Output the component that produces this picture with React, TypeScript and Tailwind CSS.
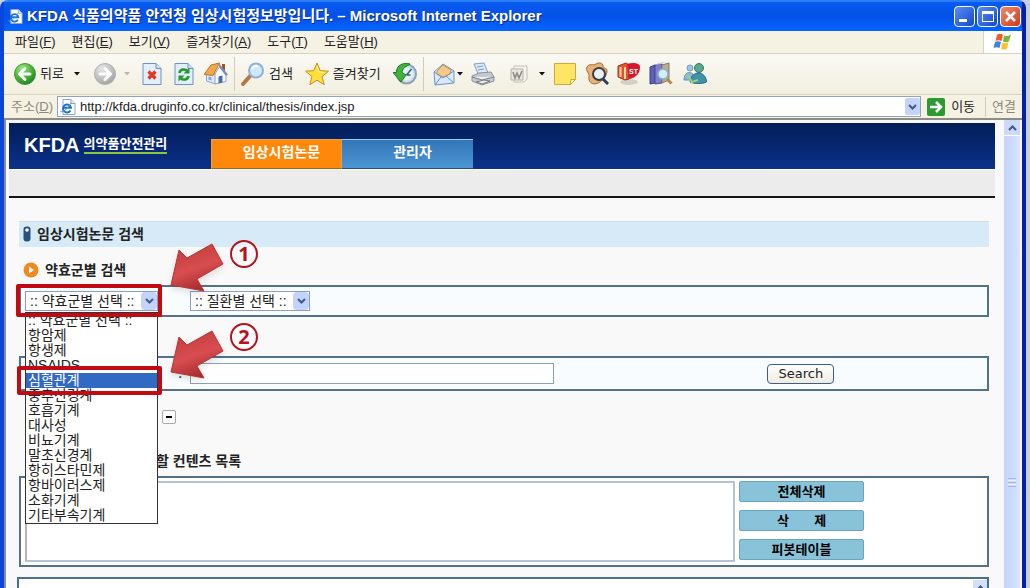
import React, { useState } from "react";

const groups = [
  ":: 약효군별 선택 ::",
  "항암제",
  "항생제",
  "NSAIDS",
  "심혈관계",
  "중추신경계",
  "호흡기계",
  "대사성",
  "비뇨기계",
  "말초신경계",
  "항히스타민제",
  "항바이러스제",
  "소화기계",
  "기타부속기계",
];

const menus = [
  ["파일", "F"],
  ["편집", "E"],
  ["보기", "V"],
  ["즐겨찾기", "A"],
  ["도구", "T"],
  ["도움말", "H"],
];

function Caret({ muted = false }: { muted?: boolean }) {
  return (
    <svg width="6" height="4" viewBox="0 0 6 4" className="shrink-0">
      <path d="M0 0H6L3 3.5Z" fill={muted ? "#b9b7a8" : "#111"} />
    </svg>
  );
}

function IePage({ size }: { size: number }) {
  return (
    <svg width={size} height={size} viewBox="0 0 16 16" className="shrink-0">
      <path d="M3 .5h8l4 4v11H3z" fill="#fff" stroke="#8aa6c8" />
      <path d="M11 .5v4h4" fill="#dfeaf7" stroke="#8aa6c8" />
      <path d="M10.5 11.5A4 4 0 1 1 11 8.800H4" fill="none" stroke="#1d6fd0" strokeWidth="2" />
      <path d="M1 12C-1 14 6 13 11 4" fill="none" stroke="#4aa3e8" />
    </svg>
  );
}

function Arrow22({ green }: { green: boolean }) {
  return (
    <svg width="22" height="24" viewBox="0 0 22 24" className="shrink-0">
      <defs>
        <radialGradient id={green ? "orbG" : "orbN"} cx="35%" cy="25%" r="80%">
          <stop offset="0" stopColor={green ? "#9be685" : "#e6e6e6"} />
          <stop offset=".55" stopColor={green ? "#4cb53c" : "#c3c3c3"} />
          <stop offset="1" stopColor={green ? "#1d821c" : "#a2a2a2"} />
        </radialGradient>
      </defs>
      <circle cx="11" cy="12" r="10.500" fill={green ? "url(#orbG)" : "url(#orbN)"} stroke={green ? "#3f9a36" : "#b0b0b0"} />
      <g fill="none" stroke="#fff" strokeWidth="3" strokeLinecap="round" strokeLinejoin="round">
        {green ? <path d="M16 12H6M11 6.500L5.500 12L11 17.500" /> : <path d="M6 12H16M11 6.500L16.500 12L11 17.500" />}
      </g>
    </svg>
  );
}

function Ico({ children }: { children: React.ReactNode }) {
  return (
    <svg width="24" height="24" viewBox="0 0 24 24" className="shrink-0">
      {children}
    </svg>
  );
}

const StopIcon = () => (
  <Ico>
    <path d="M3 1.500h13l5 5v16H3z" fill="#e2eefb" stroke="#6f93c0" />
    <path d="M16 1.500v5h5" fill="#cfe0f5" stroke="#6f93c0" />
    <path d="M8.500 9.500l7 7M15.500 9.500l-7 7" stroke="#e2381c" strokeWidth="3.200" />
  </Ico>
);
const RefreshIcon = () => (
  <Ico>
    <path d="M3 1.500h13l5 5v16H3z" fill="#e2eefb" stroke="#6f93c0" />
    <path d="M16 1.500v5h5" fill="#cfe0f5" stroke="#6f93c0" />
    <path d="M7.500 11c.5-4 6-4.500 7.500-2" fill="none" stroke="#239a2c" strokeWidth="2.600" />
    <path d="M17.500 5.500v6h-6z" fill="#239a2c" />
    <path d="M16.500 14c-.5 4-6 4.500-7.500 2" fill="none" stroke="#239a2c" strokeWidth="2.600" />
    <path d="M6.500 19.500v-6h6z" fill="#239a2c" />
  </Ico>
);
const HomeIcon = () => (
  <Ico>
    <path d="M18 2h3v7h-3z" fill="#a8502a" />
    <path d="M2.500 12l5-5 4 6v9l-9-3z" fill="#dfe9f8" stroke="#8ea6c9" />
    <path d="M11 22V12l5-8 6 8v7.500z" fill="#f7f9fd" stroke="#8ea6c9" />
    <path d="M0 12.500L7 3l8.500-2L9 13.500z" fill="#f2a84a" stroke="#bf7420" />
    <path d="M15 1.500l9 11-2 1.500-7-9z" fill="#7a8fb8" />
    <path d="M14.500 14.500l4-1v7l-4 1z" fill="#4b6da8" />
    <path d="M4.500 14.500l3 1v3l-3-1z" fill="#7ea5dc" />
  </Ico>
);
const SearchIcon = () => (
  <Ico>
    <path d="M2 22l8-9" stroke="#b77845" strokeWidth="4" strokeLinecap="round" />
    <circle cx="15" cy="8.500" r="7" fill="#cfe9fb" stroke="#8db2d6" strokeWidth="2" />
    <path d="M11 7c1-3 4-3.500 6-2.500" fill="none" stroke="#fff" strokeWidth="2" />
  </Ico>
);
const StarIcon = () => (
  <Ico>
    <path d="M12 1l3.200 7.600 8.300.6-6.400 5.300 2.100 8.200L12 18.200 4.800 22.700l2.100-8.200L.5 9.200l8.300-.6z" fill="#ffdf3d" stroke="#c98f12" strokeLinejoin="round" />
    <path d="M12 4l2 6 5 .500" fill="none" stroke="#fff6b5" />
  </Ico>
);
const HistoryIcon = () => (
  <Ico>
    <circle cx="13.500" cy="12" r="9.500" fill="#cfe0ea" stroke="#8ba3b2" strokeWidth="2" />
    <circle cx="13.500" cy="12" r="6.500" fill="#e3f0f7" />
    <path d="M13.500 13l5-6M13.500 13h4" stroke="#345a78" strokeWidth="1.500" />
    <path d="M17 2C11 0 3 3 3.500 10.500H0l8 9.500 5-7-4-2.500c0-4 4-6 8-8.500z" fill="#43b23c" stroke="#197d20" />
  </Ico>
);
const MailIcon = () => (
  <Ico>
    <path d="M2 10l9-8 11 7v12L3 23z" fill="#d7e9fa" stroke="#6f94c2" />
    <path d="M5 9l6-6 8 5-1 4-7 3-6-3z" fill="#f6c98a" stroke="#cb9452" />
    <path d="M2 10l9 6 11-7M3 23l6-8M22 21l-8-7" fill="none" stroke="#6f94c2" />
  </Ico>
);
const PrinterIcon = () => (
  <Ico>
    <path d="M3 2l10-1 4 10-9 3z" fill="#dceafb" stroke="#7d9cc9" />
    <path d="M6 5l6-1M7 8l6-1" stroke="#7d9cc9" />
    <path d="M1 14l7-3 12-1 3 5v4l-12 4-10-4z" fill="#c6c9cf" stroke="#8d929b" />
    <path d="M1 15l10 3 12-3M5 20l8-2 6 1-8 3z" fill="#eceef1" stroke="#777c85" />
  </Ico>
);
const WordIcon = () => (
  <Ico>
    <path d="M7 4h13v13l-3 3H7z" fill="#f4f2ea" stroke="#c4c2b8" />
    <path d="M4 7h12v11H4z" fill="#e9e7df" stroke="#b5b3a9" />
    <path d="M6 10l2 6 2-5 2 5 3-7" fill="none" stroke="#8a8880" strokeWidth="1.500" />
  </Ico>
);
const NoteIcon = () => (
  <Ico>
    <path d="M1.500 1.500h21v16l-5 5h-16z" fill="#ffe566" stroke="#d1a83a" />
    <path d="M22.500 17.500h-5v5z" fill="#fff4b0" stroke="#d1a83a" />
  </Ico>
);
const ResearchIcon = () => (
  <Ico>
    <path d="M2 5c2-4 6-1 9-3s7-1 7 2 4 1 4 5-3 9-9 12S3 19 4 15 0 9 2 5z" fill="#e9b27a" stroke="#a5682f" />
    <circle cx="14" cy="12" r="6" fill="#e8f2f5" stroke="#3d3d45" strokeWidth="2" />
    <path d="M18 17l5 5" stroke="#2b3b5b" strokeWidth="3" />
  </Ico>
);
const DictionaryIcon = () => (
  <Ico>
    <ellipse cx="12" cy="20" rx="9" ry="3" fill="#d2cfc4" />
    <path d="M1 4l8-3 3 2v14l-4 1-7-3z" fill="#e2532d" stroke="#a5301a" />
    <path d="M3.500 5v10M8 5v12" fill="none" stroke="#ffd9a0" strokeWidth="2" />
    <path d="M10 2c6-2 13-1 13 3 0 6-4 11-11 12z" fill="#d8182a" />
    <text x="12" y="12" fontSize="7" fill="#fff" fontFamily="Liberation Sans, sans-serif" fontWeight="700">ST</text>
  </Ico>
);
const BooksIcon = () => (
  <Ico>
    <path d="M1 5l5-2v18l-5 1z" fill="#5b62b8" stroke="#3e3f8c" />
    <path d="M6 3l7-1v19l-7 1z" fill="#7f80cc" stroke="#4a4a99" />
    <path d="M6 3l3-2 7-1-3 2z" fill="#c9c6e6" />
    <path d="M13 3l7-2v17l-7 3z" fill="#b5ae9a" stroke="#857a5b" />
    <circle cx="14" cy="12" r="5" fill="#d3eef7" stroke="#8fb0c4" strokeWidth="1.500" />
    <path d="M18 17l4.500 4.500" stroke="#b08a48" strokeWidth="3" />
  </Ico>
);
const MessengerIcon = () => (
  <Ico>
    <circle cx="7" cy="6" r="3" fill="#9fc6e3" stroke="#6f9dc4" />
    <path d="M1 18c0-10 10-10 12 0z" fill="#8abbdd" stroke="#6094bb" />
    <circle cx="16" cy="6" r="4.500" fill="#5aa98c" stroke="#337a68" />
    <path d="M7 20c1-12 16-12 16.500 0-4 2-12 2-16.500 0z" fill="#3f93a8" stroke="#2c6985" />
    <path d="M4 12l5 8 6-2" fill="none" stroke="#9ad07d" strokeWidth="2" />
  </Ico>
);

function Chevron({ up = false }: { up?: boolean }) {
  return (
    <svg width="9" height="6" viewBox="0 0 9 6">
      <path d={up ? "M1 5L4.500 1.500L8 5" : "M1 1L4.500 4.500L8 1"} fill="none" stroke="#3d5a8c" strokeWidth="2" />
    </svg>
  );
}

function Select({ label, options, width }: { label: string; options: string[]; width: string }) {
  return (
    <div className={"relative " + width}>
      <select
        aria-label={label}
        className="block h-5 w-full appearance-none border border-[#8aa0bd] bg-white pl-1 text-sm leading-4 text-[#222] outline-none"
      >
        {options.map((o) => (
          <option key={o}>{o}</option>
        ))}
      </select>
      <span className="pointer-events-none absolute inset-y-px right-px flex w-4 items-center justify-center rounded-sm bg-[#c3d3fb]">
        <Chevron />
      </span>
    </div>
  );
}

function Pointer({ id }: { id: string }) {
  return (
    <svg width="56" height="52" viewBox="0 0 56 52" className="block drop-shadow-md">
      <defs>
        <linearGradient id={id} x1="0.3" y1="0" x2="0.7" y2="1">
          <stop offset="0" stopColor="#c23a3a" />
          <stop offset=".5" stopColor="#d84e50" />
          <stop offset="1" stopColor="#9f2527" />
        </linearGradient>
      </defs>
      <path d="M1 43L9 8L17 16L42 2L53 22L27 37L34 49Z" fill={"url(#" + id + ")"} stroke="#b53436" strokeLinejoin="round" />
    </svg>
  );
}

function Num({ children }: { children: React.ReactNode }) {
  return (
    <span className="flex size-7 items-center justify-center rounded-full border-2 border-[#b8101c] bg-white/40 font-['Noto_Sans',sans-serif] text-xl leading-none font-bold text-[#b8101c]">
      {children}
    </span>
  );
}

const toolBtn = "flex shrink-0 items-center";
const panel = "border-2 border-[#53728a]";
const action =
  "h-[21px] w-[125px] rounded-xs border border-[#6ba6bf] bg-[#88c3da] text-[13px] leading-4 font-bold whitespace-pre text-black";

export default function App() {
  const [picked, setPicked] = useState(4);
  return (
    <div className="flex h-screen overflow-hidden bg-[#c9cfdf] pr-1 font-['Liberation_Sans','Noto_Sans_CJK_KR',sans-serif] text-[#222]">
      <div className="flex min-w-0 flex-1 flex-col rounded-t-lg border-x-4 border-t-2 border-[#0b46dc] border-t-[#2b7df5] border-r-[#0420a8] bg-[#f5f2e4]">
        <header className="flex h-[29px] shrink-0 items-center bg-linear-to-b from-[#0a5cf0] via-[#0550e8] to-[#0466ff] pr-px pl-1 text-white">
          <IePage size={15} />
          <h1 className="ml-1 flex-1 truncate text-[15px] font-bold">
            <span className="[text-shadow:1px_1px_0_#0a2f90]">KFDA 식품의약품 안전청 임상시험정보방입니다. – Microsoft Internet Explorer</span>
          </h1>
          <div className="flex gap-0.5">
            <button aria-label="최소화" className="flex size-[21px] items-end rounded-sm border border-white bg-linear-to-br from-[#5a8df5] to-[#1546c8] pb-1 pl-1">
              <span className="h-[3px] w-2 bg-white" />
            </button>
            <button aria-label="최대화" className="flex size-[21px] items-center justify-center rounded-sm border border-white bg-linear-to-br from-[#5a8df5] to-[#1546c8]">
              <span className="h-[11px] w-3 border border-t-[3px] border-white" />
            </button>
            <button aria-label="닫기" className="flex size-[21px] items-center justify-center rounded-sm border border-white bg-linear-to-br from-[#f08a68] to-[#cf3511]">
              <svg width="13" height="13" viewBox="0 0 13 13">
                <path d="M2 2l9 9M11 2l-9 9" stroke="#fff" strokeWidth="2.500" />
              </svg>
            </button>
          </div>
        </header>

        <nav className="flex h-[23px] shrink-0 items-center border-b border-[#d8d3c0] pl-[11px] text-[13px]">
          <div className="flex flex-1 gap-4">
            {menus.map(([t, k]) => (
              <button key={k} className="leading-5">
                {t}(<u>{k}</u>)
              </button>
            ))}
          </div>
          <span className="flex h-full w-[39px] items-center justify-center border-l border-[#d8d3c0] bg-white">
            <svg width="20" height="18" viewBox="0 0 20 18">
              <path d="M4 2c2-2 4-1 6 0L8.500 8c-2-1-4-1-6 0z" fill="#ee5a2c" />
              <path d="M11 2.500c2 1 4 1 7-1L16 8c-2 2-4 1-6 .5z" fill="#74b83a" />
              <path d="M2 9c2-1 4-1 6 0l-1.500 6c-2-1-4-1-6 0z" fill="#3c83dc" />
              <path d="M9.500 9.500c2 1 4 1 6-.5l-1.500 6.500c-2 2-4 1-6 0z" fill="#fbc22c" />
            </svg>
          </span>
        </nav>

        <div className="flex h-[41px] shrink-0 items-center border-b border-[#d8d3c0] bg-linear-to-b from-[#faf9f4] to-[#f2efdf] pl-2.5 text-[13px]">
          <button className={toolBtn + " gap-1"}>
            <Arrow22 green />
            뒤로
          </button>
          <button aria-label="뒤로 목록" className="ml-2.5"><Caret /></button>
          <button aria-label="앞으로" className="ml-3.5"><Arrow22 green={false} /></button>
          <span className="ml-2 flex"><Caret muted /></span>
          <div className="ml-2.5 flex gap-2">
            <button aria-label="중지"><StopIcon /></button>
            <button aria-label="새로 고침"><RefreshIcon /></button>
            <button aria-label="홈"><HomeIcon /></button>
          </div>
          <span className="ml-1.5 h-[34px] w-px bg-[#d0ccba]" />
          <button className={toolBtn + " ml-1.5 gap-1"}><SearchIcon />검색</button>
          <button className={toolBtn + " ml-3 gap-1"}><StarIcon />즐겨찾기</button>
          <button aria-label="목록 보기" className="ml-3"><HistoryIcon /></button>
          <span className="ml-1.5 h-[34px] w-px bg-[#d0ccba]" />
          <button aria-label="메일" className={toolBtn + " ml-2 gap-px"}><MailIcon /><Caret /></button>
          <button aria-label="인쇄" className="ml-2"><PrinterIcon /></button>
          <button aria-label="편집" className={toolBtn + " ml-3 gap-2"}><WordIcon /><Caret /></button>
          <div className="ml-2 flex gap-2">
            <button aria-label="메모"><NoteIcon /></button>
            <button aria-label="리서치"><ResearchIcon /></button>
            <button aria-label="사전"><DictionaryIcon /></button>
            <button aria-label="참조"><BooksIcon /></button>
            <button aria-label="메신저" className="ml-0.5"><MessengerIcon /></button>
          </div>
        </div>

        <form className="flex h-[23px] shrink-0 items-center pl-[7px] text-[13px]" onSubmit={(e) => e.preventDefault()}>
          <label htmlFor="addr" className="w-[46px] text-[#8b897d]">
            주소(<u>D</u>)
          </label>
          <div className="flex h-[21px] flex-1 items-center border border-[#8ea4bf] bg-white pl-0.5">
            <IePage size={16} />
            <input
              id="addr"
              defaultValue="http://kfda.druginfo.co.kr/clinical/thesis/index.jsp"
              className="ml-1 h-4 min-w-0 flex-1 bg-transparent text-[13px] outline-none"
            />
            <button type="button" aria-label="주소 목록" className="flex h-[17px] w-[15px] items-center justify-center rounded-xs bg-[#c3d3fb]">
              <Chevron />
            </button>
          </div>
          <button className="ml-1.5 flex items-center gap-1.5">
            <svg width="18" height="18" viewBox="0 0 18 18">
              <rect width="18" height="18" rx="2" fill="#2b9a30" />
              <path d="M3 9h11M9 4l5 5-5 5" fill="none" stroke="#fff" strokeWidth="2.500" />
            </svg>
            이동
          </button>
          <span className="mr-1.5 ml-2.5 h-5 border-l border-[#d0ccba] pl-1.5 leading-5 text-[#8b897d]">연결</span>
        </form>

        <div className="flex min-h-0 flex-1 border-t-2 border-l-2 border-[#8d8d86] bg-[#f9f9fa]">
          <main className="min-w-0 flex-1 overflow-hidden pt-[3px] pr-[9px] pl-[3px]">
            <div className="flex h-[46px] items-end bg-linear-to-b from-[#021e58] to-[#0c318a] text-white">
              <div className="flex h-full w-[202px] shrink-0 items-start gap-1 pt-2 pl-[15px]">
                <span className="text-xl leading-7 font-bold">KFDA</span>
                <span className="mt-1 border-b-2 border-[#8cc63f] text-[13px] leading-[17px] font-bold whitespace-nowrap">의약품안전관리</span>
              </div>
              <a href="#thesis" className="flex h-[30px] w-[131px] shrink-0 items-center justify-center border border-[#e9a14d] border-b-[#a96312] bg-[#ff8709] pb-1 pl-2.5 text-sm leading-5 font-bold">
                임상시험논문
              </a>
              <a href="#admin" className="flex h-[30px] w-[131px] shrink-0 items-center justify-center border-t border-b border-t-[#9cc9f0] border-b-[#2c4c8a] bg-linear-to-b from-[#3476b8] to-[#4c96d6] pb-1 pl-2.5 text-sm leading-5 font-bold">
                관리자
              </a>
            </div>
            <div className="h-[29px] border-t border-b-2 border-t-white border-b-[#151515] bg-[#ececec]" />

            <div className="pr-1.5 pl-[10px]">
              <h2 className="mt-[23px] flex h-[26px] items-center gap-1.5 border-t border-[#d3dde2] bg-[#d6eaf7] pb-0.5 pl-1 text-sm leading-5 font-bold">
                <svg width="8" height="16" viewBox="0 0 8 16">
                  <rect x=".5" y=".5" width="7" height="15" rx="3" fill="#26527f" />
                  <circle cx="4" cy="4" r="1.800" fill="#fff" />
                </svg>
                임상시험논문 검색
              </h2>

              <h3 className="mt-3 flex h-[22px] items-center gap-1.5 pl-1 text-sm leading-5 font-bold">
                <svg width="16" height="16" viewBox="0 0 16 16" className="shrink-0">
                  <circle cx="8" cy="8" r="7.500" fill="#f08a1c" />
                  <path d="M6 4.500L11 8L6 11.500Z" fill="#fff" />
                </svg>
                약효군별 검색
              </h3>

              <section className={panel + " mt-1 flex h-8 items-center bg-[#f8fcfe] px-1"}>
                <div className="relative">
                  <Select label="약효군별" options={groups} width="w-[133px]" />
                  <ul
                    role="listbox"
                    aria-label="약효군별 목록"
                    className="absolute top-[21px] left-0 z-10 w-[133px] border border-[#333] bg-white text-sm leading-[15px]"
                  >
                    {groups.map((g, i) => (
                      <li
                        key={g}
                        role="option"
                        aria-selected={i === picked}
                        onClick={() => setPicked(i)}
                        className={"h-[15px] overflow-hidden pl-0.5 whitespace-nowrap " + (i === picked ? "bg-[#316ac5] text-white" : "")}
                      >
                        {g}
                      </li>
                    ))}
                  </ul>
                  <span className="pointer-events-none absolute -top-[7px] -left-[9px] z-20 h-[33px] w-[146px] rounded-xs border-4 border-[#c20a12]" />
                  <span className="pointer-events-none absolute top-[75px] -left-[8px] z-20 h-[29px] w-[145px] rounded-xs border-4 border-[#c20a12]" />
                  <div className="pointer-events-none absolute -top-[49px] left-[145px] z-30"><Pointer id="p1" /></div>
                  <div className="pointer-events-none absolute top-[38px] left-[145px] z-30"><Pointer id="p2" /></div>
                  <div className="pointer-events-none absolute -top-[51px] left-[205px] z-30"><Num>1</Num></div>
                  <div className="pointer-events-none absolute top-[32px] left-[205px] z-30"><Num>2</Num></div>
                </div>
                <div className="ml-8">
                  <Select label="질환별" options={[":: 질환별 선택 ::"]} width="w-[120px]" />
                </div>
              </section>

              <section className={panel + " mt-[39px] flex h-[35px] items-center bg-[#f8fcfe]"}>
                <label htmlFor="query" className="ml-[157px] text-[13px] font-bold text-[#26527f]">:</label>
                <input id="query" className="ml-2 h-[21px] w-[364px] border border-[#8aa0bd] bg-white px-1 text-sm outline-none" />
                <button className="ml-[213px] h-5 w-[67px] rounded-sm border border-[#3e6080] bg-linear-to-b from-white to-[#eeece2] font-['DejaVu_Sans',sans-serif] text-[13px] leading-4">
                  Search
                </button>
              </section>

              <div className="mt-4 flex h-5 items-center pl-[143px]">
                <button aria-label="접기" className="flex size-3.5 items-center justify-center rounded-xs border border-[#a8a8a8] bg-white">
                  <span className="h-0.5 w-1.5 bg-black" />
                </button>
              </div>

              <h3 className="mt-[23px] flex h-[22px] items-center pl-[137px] text-sm leading-5 font-bold">할 컨텐츠 목록</h3>

              <section className={panel + " mt-1 flex h-[91px] gap-1 bg-white pt-[3px] pl-1"}>
                <textarea
                  aria-label="컨텐츠 목록"
                  className="h-[81px] w-[710px] resize-none border-2 border-[#b4c4d2] border-l-[#b9b5ad] bg-white outline-none"
                />
                <div className="flex flex-col gap-2">
                  <button className={action}>전체삭제</button>
                  <button className={action}>{"삭       제"}</button>
                  <button className={action}>피봇테이블</button>
                </div>
              </section>

              <section className="mt-2.5 -ml-0.5 flex h-40 justify-end border-2 border-[#4a6f96] bg-white">
                <span className="mt-px flex h-4 w-3.5 items-center justify-center bg-[#d3e0f8]">
                  <Chevron up />
                </span>
              </section>
            </div>
          </main>
          <div className="mr-0.5 flex w-4 flex-col bg-linear-to-r from-[#c4d4fa] to-[#d6e3fc]">
            <button aria-label="위로" className="flex h-4 items-center justify-center border-b border-white bg-[#cbdafb]">
              <Chevron up />
            </button>
            <div className="flex min-h-0 flex-1 flex-col items-center justify-center gap-px pt-60">
              <span className="h-px w-2 bg-[#9db8f0]" />
              <span className="h-px w-2 bg-[#eef4fe]" />
              <span className="h-px w-2 bg-[#9db8f0]" />
              <span className="h-px w-2 bg-[#eef4fe]" />
              <span className="h-px w-2 bg-[#9db8f0]" />
            </div>
          </div>
        </div>
      </div>
    </div>
  );
}
